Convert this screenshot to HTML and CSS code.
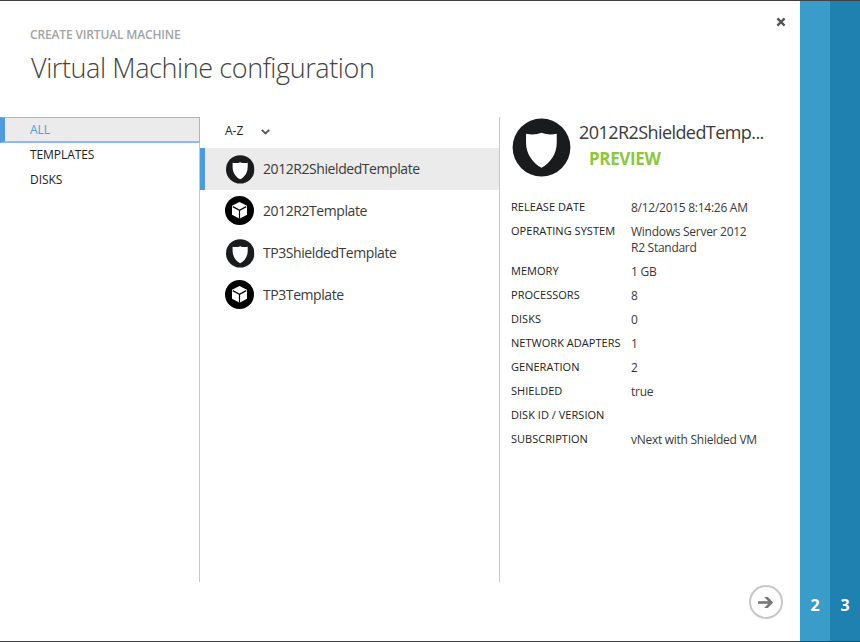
FILE: index.html
```html
<!DOCTYPE html>
<html lang="en">
<head>
<meta charset="utf-8">
<title>Create Virtual Machine</title>
<link rel="stylesheet" href="styles.css">
</head>
<body>
<svg class="defs" width="0" height="0" aria-hidden="true">
  <symbol id="shield" viewBox="0 0 58 58">
    <circle cx="29" cy="29" r="28.4" fill="#191b1c"/>
    <path fill="#fff" d="M13.8 15.5Q22 17.5 29 14.5Q36 17.5 44 15.5V24C44 36 37 44.5 29 48.8C21 44.5 13.8 36 13.8 24Z"/>
  </symbol>
  <symbol id="cube" viewBox="0 0 29 29">
    <circle cx="14.5" cy="14.5" r="14.5" fill="#000"/>
    <path fill="#fff" d="M14.5 6L22 9.7V18.8L14.5 22.8L7 18.8V9.7Z"/>
    <path fill="none" stroke="#000" stroke-width="1.2" d="M7.8 10.6L14.5 14.2L21.2 10.6M14.5 14.2V22.8"/>
  </symbol>
</svg>
<div class="wizard">
  <main class="step">
    <header class="head">
      <div class="titles">
        <p class="kicker">CREATE VIRTUAL MACHINE</p>
        <h1 class="title">Virtual Machine configuration</h1>
      </div>
      <svg class="close" viewBox="0 0 10 10"><path d="M1.4 1.4L8.6 8.6M8.6 1.4L1.4 8.6"/></svg>
    </header>
    <div class="columns">
      <nav class="filters">
        <div class="filter selected">ALL</div>
        <div class="filter">TEMPLATES</div>
        <div class="filter">DISKS</div>
      </nav>
      <section class="list">
        <div class="sort"><span>A-Z</span><svg class="chevron" viewBox="0 0 9 6"><path d="M.8 .8L4.5 4.5L8.2 .8"/></svg></div>
        <div class="item current"><svg class="icon shielded"><use href="#shield"/></svg><span>2012R2ShieldedTemplate</span></div>
        <div class="item"><svg class="icon"><use href="#cube"/></svg><span>2012R2Template</span></div>
        <div class="item"><svg class="icon shielded"><use href="#shield"/></svg><span>TP3ShieldedTemplate</span></div>
        <div class="item"><svg class="icon"><use href="#cube"/></svg><span>TP3Template</span></div>
      </section>
      <section class="details">
        <div class="summary">
          <svg class="large-icon"><use href="#shield"/></svg>
          <div>
            <div class="name">2012R2ShieldedTemp...</div>
            <div class="preview">PREVIEW</div>
          </div>
        </div>
        <dl class="facts">
          <dt>RELEASE DATE</dt><dd>8/12/2015 8:14:26 AM</dd>
          <dt>OPERATING SYSTEM</dt><dd>Windows Server 2012<br>R2 Standard</dd>
          <dt>MEMORY</dt><dd>1 GB</dd>
          <dt>PROCESSORS</dt><dd>8</dd>
          <dt>DISKS</dt><dd>0</dd>
          <dt>NETWORK ADAPTERS</dt><dd>1</dd>
          <dt>GENERATION</dt><dd>2</dd>
          <dt>SHIELDED</dt><dd>true</dd>
          <dt>DISK ID / VERSION</dt><dd></dd>
          <dt>SUBSCRIPTION</dt><dd>vNext with Shielded VM</dd>
        </dl>
      </section>
    </div>
    <footer class="foot">
      <svg class="next" viewBox="0 0 34 34"><circle cx="17" cy="17" r="16"/><path class="shaft" d="M9 17.5H22"/><path class="tip" d="M15.2 12H18.8L24.2 17.5L18.8 23H15.2L20.4 17.5Z"/></svg>
    </footer>
  </main>
  <div class="tab two">2</div>
  <div class="tab three">3</div>
</div>
</body>
</html>
```
FILE: styles.css
```css
* { box-sizing: border-box; }
body, p, h1, dl, dd { margin: 0; }
body { font-family: "Open Sans", "Noto Sans", sans-serif; color: #3a3a3a; background: #fff; }
svg { display: block; flex: none; }
.defs { position: absolute; }
.wizard { display: flex; height: 642px; border-top: 1px solid #414143; border-bottom: 1px solid #414143; }
.step { width: 800px; display: flex; flex-direction: column; }
.head { height: 116px; display: flex; justify-content: space-between; padding: 25px 14px 0 30px; }
.kicker { font-size: 12px; line-height: 18px; font-weight: 600; color: #a3a3a3; letter-spacing: -.15px; white-space: nowrap; }
.title { margin: 5px 0 0 1px; font-size: 27px; line-height: 38px; font-weight: 300; color: #444; letter-spacing: -.41px; white-space: nowrap; }
.close { width: 10px; height: 10px; margin-top: -9px; fill: none; stroke: #555; stroke-width: 2.3; }
.columns { display: flex; height: 465px; }
.filters { width: 200px; border-right: 1px solid #c8c8c8; }
.filter { height: 25px; padding-left: 30px; font-size: 12px; line-height: 25px; color: #222; letter-spacing: -.08px; }
.filter.selected { height: 26px; margin-right: -1px; padding-left: 25px; background: #ebebeb; color: #4f9bd9; border: 1px solid #8fb8f8; border-left: 5px solid #4f9bd9; border-bottom-width: 2px; line-height: 24px; margin-bottom: -1px; position: relative; }
.list { width: 300px; border-right: 1px solid #c8c8c8; }
.sort { height: 31px; display: flex; align-items: center; padding: 0 0 4px 25px; font-size: 12px; gap: 18px; color: #222; }
.chevron { width: 9px; height: 6px; margin-top: 2px; fill: none; stroke: #555; stroke-width: 1.8; }
.item { height: 42px; display: flex; align-items: center; padding: 0 0 2px 25px; gap: 9px; font-size: 14px; letter-spacing: -.43px; white-space: nowrap; }
.item.current { background: #ebebeb; border-left: 5px solid #4f9bd9; padding-left: 20px; }
.icon { width: 29px; height: 29px; }
.shielded { transform: translate(.7px, .9px); }
.details { flex: 1; padding-left: 11px; }
.summary { display: flex; height: 82px; gap: 8px; padding: 1px 0 0 1px; }
.large-icon { width: 59px; height: 59px; }
.name { font-size: 18px; line-height: 26px; margin-top: 1px; letter-spacing: -.57px; white-space: nowrap; }
.preview { margin: 1px 0 0 10px; font-size: 17px; line-height: 26px; font-weight: 700; color: #8dc63f; letter-spacing: -.35px; }
.facts { display: grid; grid-template-columns: 120px auto; row-gap: 8px; font-size: 12px; line-height: 16px; white-space: nowrap; }
.facts dt { font-size: 11px; color: #222; letter-spacing: .03px; }
.facts dd { padding-top: 1px; margin-bottom: -1px; letter-spacing: -.27px; }
.foot { margin-top: auto; padding: 0 17px 22px; display: flex; justify-content: flex-end; }
.next { width: 34px; height: 34px; }
.next circle { fill: none; stroke: #c8c8c8; stroke-width: 2; }
.next .shaft { stroke: #777; stroke-width: 2.6; }
.next .tip { fill: #777; }
.tab { width: 30px; display: flex; align-items: flex-end; justify-content: center; padding-bottom: 24px; font-size: 16px; line-height: 24px; font-weight: 700; color: #fff; }
.two { background: #3a9dc9; }
.three { background: #1e81af; }
```
